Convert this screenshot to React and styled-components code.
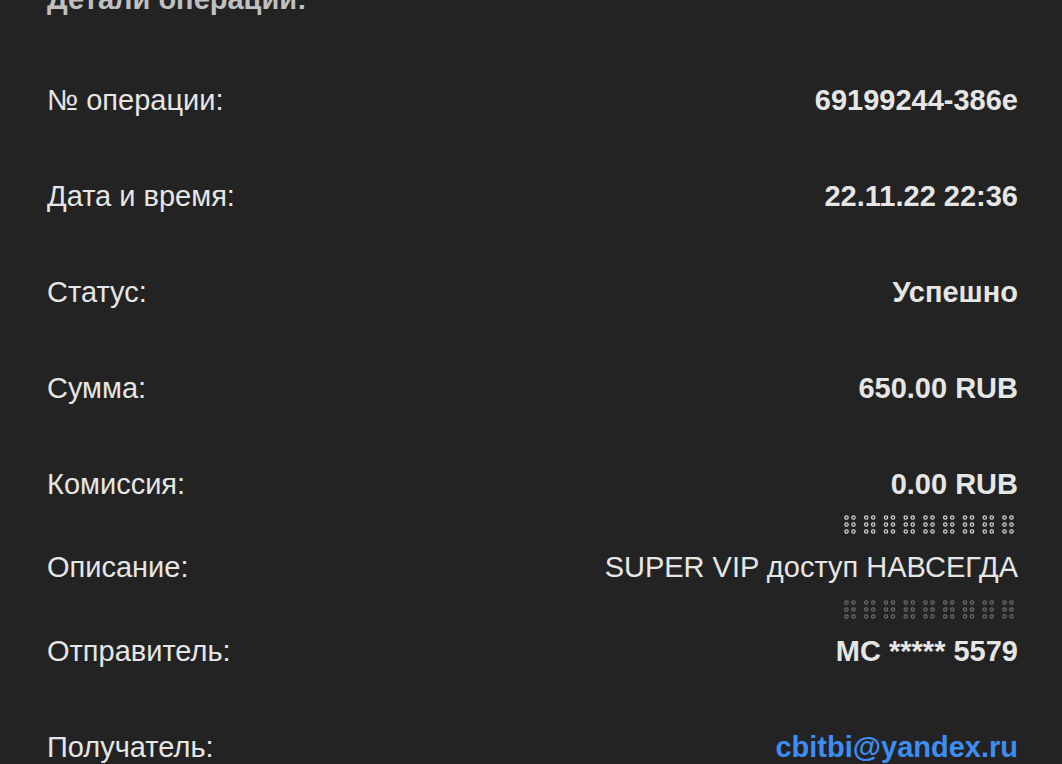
import styled, { createGlobalStyle } from "styled-components"

const Global = createGlobalStyle`
  html, body {
    margin: 0;
    padding: 0;
    background: #232323;
  }
  body {
    font-family: "Liberation Sans", Arial, sans-serif;
    overflow: hidden;
  }
`

const rows = [
  { label: "№ операции:", value: "69199244-386e" },
  { label: "Дата и время:", value: "22.11.22 22:36" },
  { label: "Статус:", value: "Успешно" },
  { label: "Сумма:", value: "650.00 RUB" },
  { label: "Комиссия:", value: "0.00 RUB" },
]

function Dots({ color }) {
  const circles = []
  for (let g = 0; g < 9; g++) {
    for (let c = 0; c < 2; c++) {
      for (let r = 0; r < 3; r++) {
        circles.push(
          <circle
            key={`${g}-${c}-${r}`}
            cx={2.5 + g * 19.75 + c * 7}
            cy={2.5 + r * 7}
            r="1.7"
            fill="none"
            stroke={color}
            strokeWidth="1.2"
          />
        )
      }
    }
  }
  return (
    <DotsSvg width="172" height="19" viewBox="0 0 172 19">
      {circles}
    </DotsSvg>
  )
}

export default function App() {
  return (
    <>
      <Global />
      <Page>
        <Title>Детали операции:</Title>
        <List>
          {rows.map((r) => (
            <Row key={r.label}>
              <Label>{r.label}</Label>
              <Value>{r.value}</Value>
            </Row>
          ))}
          <DescRow>
            <Label>Описание:</Label>
            <DescColumn>
              <Dots color="#d6d6d6" />
              <Value $light>SUPER VIP доступ НАВСЕГДА</Value>
              <Dots color="#6c6c6c" />
            </DescColumn>
          </DescRow>
          <Row>
            <Label>Отправитель:</Label>
            <Value>MC ***** 5579</Value>
          </Row>
          <Row>
            <Label>Получатель:</Label>
            <Link href="#">cbitbi@yandex.ru</Link>
          </Row>
        </List>
      </Page>
    </>
  )
}

const Page = styled.div`
  width: 1062px;
  height: 764px;
  box-sizing: border-box;
  padding: 0 44px 0 47px;
  background: #232323;
  color: #e6e6e6;
  overflow: hidden;
`

const Title = styled.h1`
  margin: -23px 0 0;
  height: 44px;
  line-height: 44px;
  font-size: 29px;
  font-weight: 700;
  color: #c0c0c0;
`

const List = styled.div`
  display: flex;
  flex-direction: column;
  margin-top: 31px;
`

const Row = styled.div`
  display: flex;
  justify-content: space-between;
  align-items: center;
  height: 96px;
  flex-shrink: 0;
`

const DescRow = styled.div`
  display: flex;
  justify-content: space-between;
  align-items: center;
  margin: -17px 0 -16px;
`

const DescColumn = styled.div`
  display: flex;
  flex-direction: column;
  align-items: flex-end;
  gap: 16px;
`

const DotsSvg = styled.svg`
  display: block;
  margin-right: 2px;
`

const Label = styled.span`
  font-size: 29px;
  line-height: 34px;
  color: #e6e6e6;
`

const Value = styled.span`
  font-size: 29px;
  line-height: 34px;
  font-weight: ${(p) => (p.$light ? 400 : 700)};
  color: #e6e6e6;
`

const Link = styled.a`
  font-size: 29px;
  line-height: 34px;
  font-weight: 700;
  color: #3d8ef0;
  text-decoration: none;
`
